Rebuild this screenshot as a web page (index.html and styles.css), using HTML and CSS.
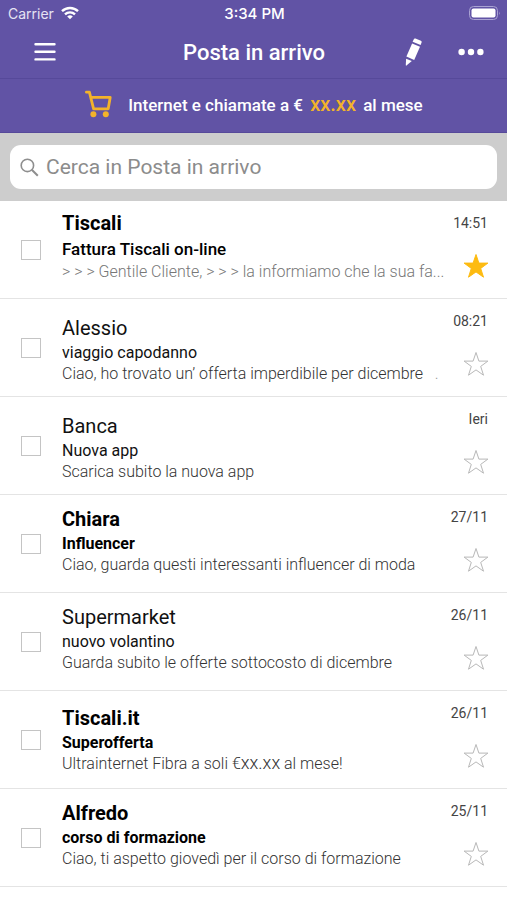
FILE: index.html
```html
<!DOCTYPE html>
<html lang="it">
	<head>
		<meta charset="UTF-8" />
		<meta name="viewport" content="width=device-width, initial-scale=1.0" />
		<title>Posta in arrivo</title>
		<link rel="stylesheet" href="styles.css">
	</head>

	<body>
		<svg class="defs" aria-hidden="true">
			<symbol id="star" viewBox="0 0 26 26">
				<path d="M13 1.5l2.9 8.6h9l-7.2 5.3 2.8 8.8-7.5-5.3-7.5 5.3 2.8-8.8L1.1 10.1h9z" />
			</symbol>
		</svg>

		<header class="header">
			<div class="status">
				<div class="carrier">
					<span>Carrier</span>
					<svg width="18" height="14" viewBox="0 0 18 14" fill="none" stroke="#fff" stroke-width="2.4">
						<path d="M1 5.2a11.5 11.5 0 0 1 16 0" />
						<path d="M4 8.4a7.2 7.2 0 0 1 10 0" />
						<path d="M9 13.2L6.2 10.6a4 4 0 0 1 5.6 0z" fill="#fff" stroke="none" />
					</svg>
				</div>
				<span class="clock">3:34 PM</span>
				<div class="battery">
					<svg width="32" height="16" viewBox="0 0 32 16">
						<rect x="0.5" y="1.5" width="28" height="13" rx="4" fill="none" stroke="#a9a2d2" />
						<rect x="2.5" y="3.5" width="24" height="9" rx="2" fill="#fff" />
						<path d="M30 6.5v3.5q1.5-1.7 0-3.5z" fill="#a9a2d2" />
					</svg>
				</div>
			</div>

			<div class="toolbar">
				<button class="icon-button" type="button" aria-label="Menu">
					<svg width="22" height="20" viewBox="0 0 22 20" stroke="#fff" stroke-width="2.4" stroke-linecap="round">
						<path d="M1.5 2.2h19M1.5 9.8h19M1.5 17.4h19" />
					</svg>
				</button>
				<h1 class="title">Posta in arrivo</h1>
				<div class="actions">
					<button class="icon-button" type="button" aria-label="Scrivi">
						<svg width="18" height="28" viewBox="0 0 18 28" fill="#fff">
							<path d="M8.7 1.4q.5-1.3 1.8-.8l5.4 2.2q1.2.6.7 1.8l-1 2.4-8-3.3z" />
							<path d="M7.1 5.4l7.9 3.3-5.8 13.2-7.8-3.3z" />
							<path d="M1.1 20.7l5.7 2.4-5.3 4.4q-.7.4-.7-.4z" />
						</svg>
					</button>
					<button class="icon-button" type="button" aria-label="Altro">
						<svg width="26" height="8" viewBox="0 0 26 8" fill="#fff">
							<circle cx="3.6" cy="4" r="3.2" />
							<circle cx="13" cy="4" r="3.2" />
							<circle cx="22.4" cy="4" r="3.2" />
						</svg>
					</button>
				</div>
			</div>

			<a class="promo" href="#">
				<svg width="28" height="28" viewBox="0 0 28 28" fill="none" stroke="#f3b32a" stroke-width="2.8" stroke-linejoin="round" stroke-linecap="round">
					<path d="M2.4 2.2h3l4.2 16.6h14.6L26.2 7.4H7" />
					<circle cx="9.4" cy="24.2" r="3" fill="#f3b32a" stroke="none" />
					<circle cx="21.8" cy="24.2" r="3" fill="#f3b32a" stroke="none" />
				</svg>
				<span class="promo-text">Internet e chiamate a € <b>xx.xx</b> al mese</span>
			</a>
		</header>

		<div class="search">
			<label class="search-box">
				<svg width="19" height="19" viewBox="0 0 19 19" fill="none" stroke="#8e8e8e" stroke-width="1.6">
					<circle cx="7.4" cy="7.4" r="6.2" />
					<path d="M11.8 11.8l6 6" stroke-width="2" />
				</svg>
				<input type="search" placeholder="Cerca in Posta in arrivo" aria-label="Cerca in Posta in arrivo" />
			</label>
		</div>

		<main class="mails">
			<article class="mail unread first">
				<input type="checkbox" aria-label="Seleziona Tiscali" />
				<div class="mail-body">
					<h2 class="sender">Tiscali</h2>
					<p class="subject">Fattura Tiscali on-line</p>
					<p class="preview">&gt; &gt; &gt; Gentile Cliente, &gt; &gt; &gt; la informiamo che la sua fa...</p>
				</div>
				<div class="mail-side">
					<time>14:51</time>
					<button class="star starred" type="button" aria-label="Preferito"><svg><use href="#star" /></svg></button>
				</div>
			</article>

			<article class="mail low">
				<input type="checkbox" aria-label="Seleziona Alessio" />
				<div class="mail-body">
					<h2 class="sender">Alessio</h2>
					<p class="subject">viaggio capodanno</p>
					<p class="preview">Ciao, ho trovato un’ offerta imperdibile per dicembre &nbsp; <span class="dot">.</span></p>
				</div>
				<div class="mail-side">
					<time>08:21</time>
					<button class="star" type="button" aria-label="Preferito"><svg><use href="#star" /></svg></button>
				</div>
			</article>

			<article class="mail low">
				<input type="checkbox" aria-label="Seleziona Banca" />
				<div class="mail-body">
					<h2 class="sender">Banca</h2>
					<p class="subject">Nuova app</p>
					<p class="preview">Scarica subito la nuova app</p>
				</div>
				<div class="mail-side">
					<time>Ieri</time>
					<button class="star" type="button" aria-label="Preferito"><svg><use href="#star" /></svg></button>
				</div>
			</article>

			<article class="mail unread">
				<input type="checkbox" aria-label="Seleziona Chiara" />
				<div class="mail-body">
					<h2 class="sender">Chiara</h2>
					<p class="subject">Influencer</p>
					<p class="preview">Ciao, guarda questi interessanti influencer di moda</p>
				</div>
				<div class="mail-side">
					<time>27/11</time>
					<button class="star" type="button" aria-label="Preferito"><svg><use href="#star" /></svg></button>
				</div>
			</article>

			<article class="mail">
				<input type="checkbox" aria-label="Seleziona Supermarket" />
				<div class="mail-body">
					<h2 class="sender">Supermarket</h2>
					<p class="subject">nuovo volantino</p>
					<p class="preview">Guarda subito le offerte sottocosto di dicembre</p>
				</div>
				<div class="mail-side">
					<time>26/11</time>
					<button class="star" type="button" aria-label="Preferito"><svg><use href="#star" /></svg></button>
				</div>
			</article>

			<article class="mail unread mid">
				<input type="checkbox" aria-label="Seleziona Tiscali.it" />
				<div class="mail-body">
					<h2 class="sender">Tiscali.it</h2>
					<p class="subject">Superofferta</p>
					<p class="preview">Ultrainternet Fibra a soli €<span class="price">xx.xx</span> al mese!</p>
				</div>
				<div class="mail-side">
					<time>26/11</time>
					<button class="star" type="button" aria-label="Preferito"><svg><use href="#star" /></svg></button>
				</div>
			</article>

			<article class="mail unread">
				<input type="checkbox" aria-label="Seleziona Alfredo" />
				<div class="mail-body">
					<h2 class="sender">Alfredo</h2>
					<p class="subject">corso di formazione</p>
					<p class="preview">Ciao, ti aspetto giovedì per il corso di formazione</p>
				</div>
				<div class="mail-side">
					<time>25/11</time>
					<button class="star" type="button" aria-label="Preferito"><svg><use href="#star" /></svg></button>
				</div>
			</article>
		</main>
	</body>
</html>
```
FILE: styles.css
```css
* {
	box-sizing: border-box;
}

body {
	margin: 0;
	background-color: #fff;
	font-family: Roboto, "Liberation Sans", sans-serif;
	color: #111;
}

button {
	padding: 0;
	border: 0;
	background: none;
}

svg {
	display: block;
	flex: none;
}

.defs {
	display: none;
}

.header {
	background-color: #6153a5;
	color: #fff;
}

.status {
	display: grid;
	grid-template-columns: 1fr auto 1fr;
	align-items: center;
	height: 26px;
	padding: 0 6px 0 8px;
	font-family: Inter, "Liberation Sans", sans-serif;
	font-size: 14px;
}

.carrier {
	display: flex;
	align-items: center;
	gap: 7px;
	color: #e6e3f3;
}

.clock {
	font-size: 15px;
	font-weight: 500;
}

.battery {
	justify-self: end;
}

.toolbar {
	display: grid;
	grid-template-columns: 1fr auto 1fr;
	align-items: center;
	height: 53px;
	padding: 0 23px 0 34px;
	border-bottom: 1px solid #56499a;
}

.title {
	margin: 0 10px 0 0;
	font-size: 22px;
	font-weight: 500;
}

.actions {
	display: flex;
	align-items: center;
	justify-content: flex-end;
	gap: 35px;
}

.promo {
	display: flex;
	align-items: center;
	justify-content: center;
	gap: 16px;
	height: 54px;
	border-bottom: 1px solid #56499a;
	color: #fff;
	font-size: 17px;
	font-weight: 500;
	line-height: 20px;
	text-decoration: none;
}

.promo svg {
	margin-bottom: 4px;
}

.promo b {
	margin: 0 3px;
	color: #f3b32a;
	font-size: 20px;
	font-weight: 500;
}

.promo-text {
	margin-bottom: 2px;
}

.search {
	padding: 12px 10px;
	background-color: #cdcdcd;
}

.search-box {
	display: flex;
	align-items: center;
	gap: 7px;
	height: 44px;
	padding: 0 10px;
	border-radius: 11px;
	background-color: #fff;
}

.search-box input {
	flex: 1;
	min-width: 0;
	padding: 0;
	border: 0;
	outline: 0;
	background: none;
	font: 400 21px Roboto, "Liberation Sans", sans-serif;
}

.search-box input::placeholder {
	color: #8c8c8c;
}

.mail {
	display: flex;
	height: 98px;
	padding: 0 19px 0 21px;
	border-bottom: 1px solid #e4e4e4;
}

.mail > input {
	appearance: none;
	flex: none;
	align-self: center;
	width: 20px;
	height: 20px;
	margin: 0;
	border: 1px solid #c4c4c4;
	background-color: #fff;
}

.mail > input:checked {
	background-color: #6153a5;
}

.mail-body {
	flex: 1;
	min-width: 0;
	padding-top: 12px;
	margin-left: 21px;
}

.low .mail-body {
	padding-top: 17px;
}

.mid .mail-body {
	padding-top: 15px;
}

.first .mail-body {
	padding-top: 10px;
}

.sender,
.subject,
.preview {
	margin: 0;
	overflow: hidden;
	white-space: nowrap;
	text-overflow: ellipsis;
}

.sender {
	font-size: 20px;
	font-weight: 400;
	line-height: 25px;
}

.subject {
	font-size: 16px;
	line-height: 23px;
}

.preview {
	color: #333;
	font-size: 16px;
	font-weight: 300;
	line-height: 20px;
}

.unread .sender,
.unread .subject {
	color: #000;
	font-weight: 700;
}

.first .sender {
	margin-bottom: 2px;
}

.first .subject {
	font-size: 17px;
	font-weight: 500;
}

.first .preview {
	margin-top: 1px;
	color: #777;
}

.price {
	font-size: 18px;
	line-height: 18px;
}

.dot {
	color: #999;
}

.mail-side {
	display: flex;
	flex-direction: column;
	align-items: flex-end;
	width: 40px;
	padding-top: 14px;
}

time {
	color: #444;
	font-size: 14px;
	line-height: 16px;
}

.star {
	margin: 22px -1px 0 0;
}

.star svg {
	width: 26px;
	height: 26px;
	fill: #fff;
	stroke: #b8b8b8;
}

.starred svg {
	fill: #fdbb11;
	stroke: #fdbb11;
}
```
